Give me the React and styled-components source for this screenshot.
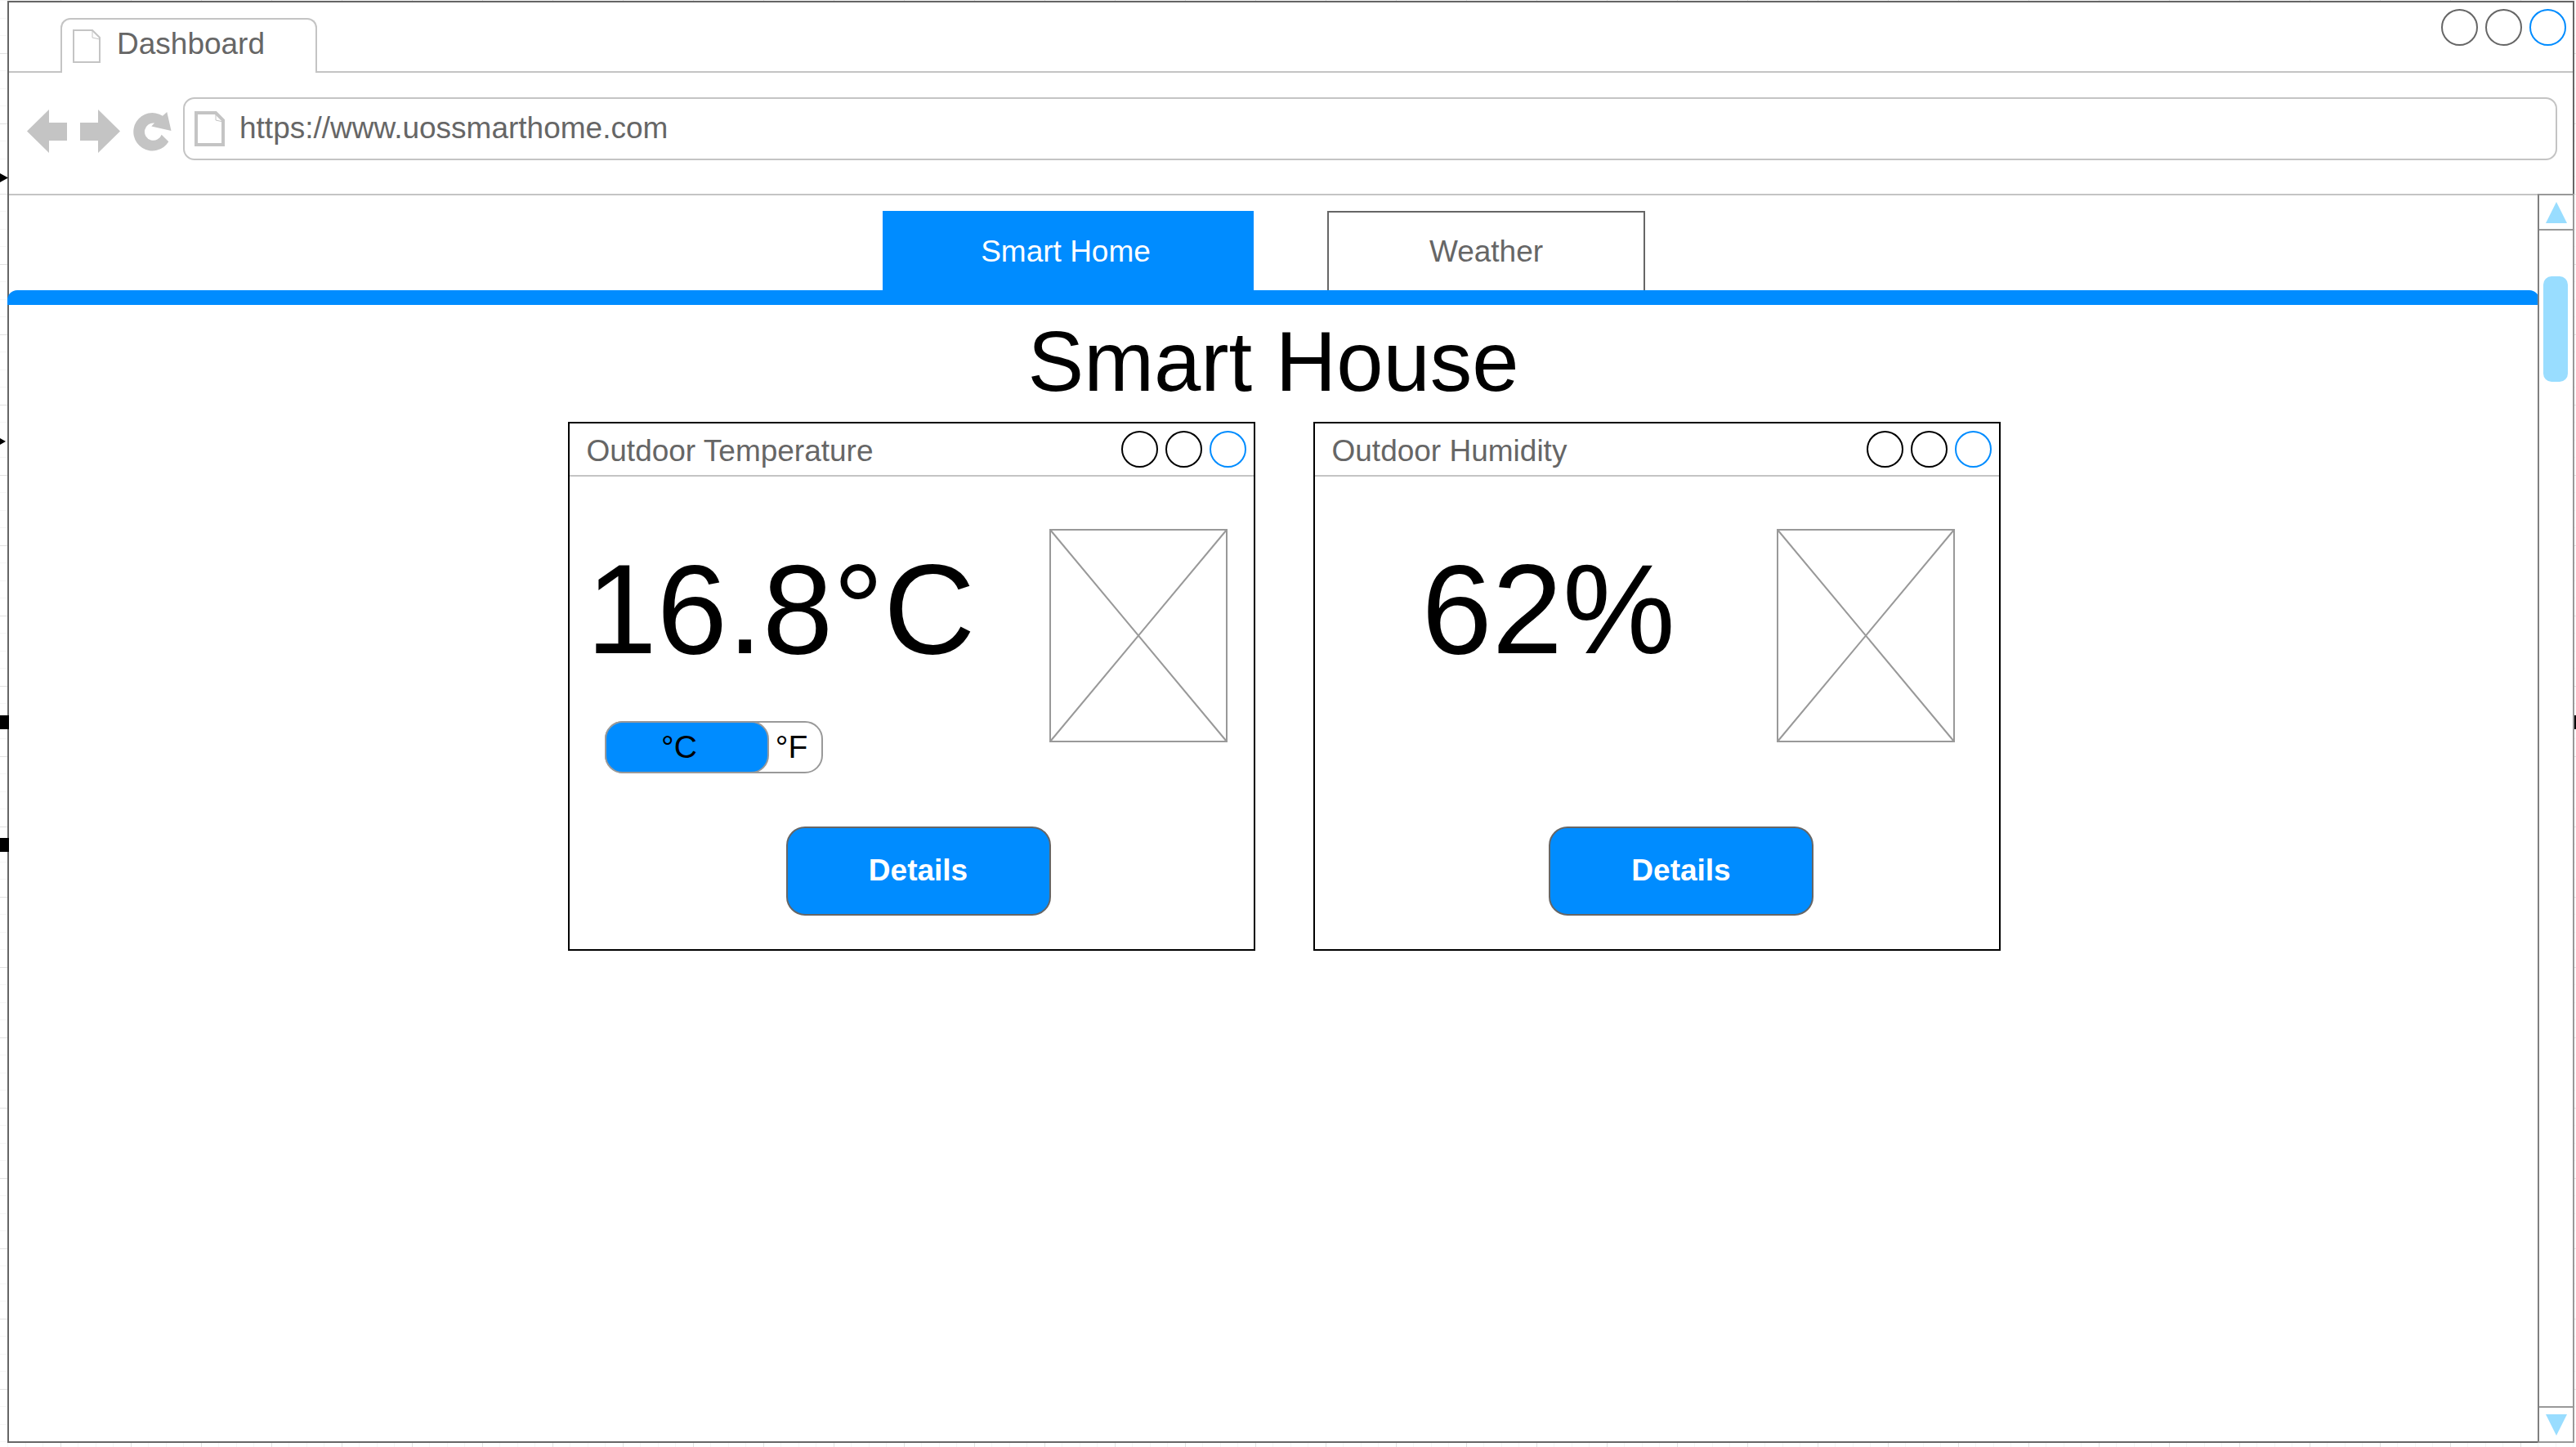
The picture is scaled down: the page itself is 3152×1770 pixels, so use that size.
import React, { useState } from "react";
import styled, { createGlobalStyle } from "styled-components";

const blue = "#008cff";
const paleBlue = "#99ddff";
const ink = "#666666";
const line = "#c4c4c4";
const midLine = "#999999";

const GlobalStyle = createGlobalStyle`
  *, *::before, *::after { box-sizing: border-box; }
  body { margin: 0; background: #fff; }
  body, button, input {
    font-family: "Liberation Sans", Arial, sans-serif;
    font-size: 37px;
    line-height: 42px;
  }
  button { padding: 0; margin: 0; border: 0; background: none; color: inherit; cursor: pointer; }
  svg { display: block; flex: none; }
`;

/* Drawing canvas with its faint ruled grid, visible around the window */
const Canvas = styled.div`
  position: relative;
  display: flex;
  min-height: 100vh;
  padding: 1px 2px 5px 9px;
  overflow: hidden;
  background-color: #fff;
  background-image:
    linear-gradient(#e2e2e2 1px, transparent 1px),
    linear-gradient(90deg, #e2e2e2 1px, transparent 1px),
    linear-gradient(#f6f6f6 1px, transparent 1px),
    linear-gradient(90deg, #f6f6f6 1px, transparent 1px),
    linear-gradient(#f6f6f6 1px, transparent 1px),
    linear-gradient(90deg, #f6f6f6 1px, transparent 1px);
  background-size: 86px 86px, 86px 86px, 43px 43px, 43px 43px, 43px 43px, 43px 43px;
  background-position: 0 65px, 74px 0, 0 0, 31px 0, 0 22px, 9px 0;
`;

const Connector = styled.span`
  position: absolute;
  z-index: 1;
  top: ${(p) => p.$top}px;
  ${(p) => (p.$right ? "right: 0;" : "left: 0;")}
  width: ${(p) => p.$width}px;
  height: ${(p) => p.$height}px;
  background: #000;
  ${(p) => p.$arrow && "clip-path: polygon(0 0, 100% 50%, 0 100%);"}
`;

const Window = styled.div`
  flex: 1;
  display: flex;
  flex-direction: column;
  border: 2px solid ${ink};
  background: #fff;
`;

const TabStrip = styled.header`
  display: flex;
  justify-content: space-between;
  align-items: flex-end;
  height: 86px;
  padding: 0 8px 0 63px;
  border-bottom: 2px solid ${line};
`;

const PageTab = styled.div`
  display: flex;
  align-items: center;
  gap: 20px;
  width: 314px;
  height: 67px;
  margin-bottom: -2px;
  padding: 0 13px;
  border: 2px solid ${line};
  border-bottom: 0;
  border-radius: 12px 12px 0 0;
  background: #fff;
  color: ${ink};
`;

const PageTabTitle = styled.span`
  padding-bottom: 6px;
`;

const Controls = styled.div`
  display: flex;
  align-self: flex-start;
  gap: 9px;
  padding-top: ${(p) => p.$top}px;
`;

const Circle = styled.button`
  width: 45px;
  height: 45px;
  border: 2px solid ${(p) => p.$color};
  border-radius: 50%;
`;

const Toolbar = styled.div`
  display: flex;
  align-items: center;
  gap: 14px;
  padding: 30px 19px 41px 22px;
  border-bottom: 2px solid ${line};
`;

const NavButtons = styled.div`
  display: flex;
  align-items: center;
  gap: 16px;
  padding-top: 6px;
`;

const AddressBar = styled.label`
  flex: 1;
  display: flex;
  align-items: center;
  gap: 18px;
  height: 77px;
  padding: 0 12px;
  border: 2px solid ${line};
  border-radius: 14px;
`;

const AddressInput = styled.input`
  flex: 1;
  min-width: 0;
  padding: 0 0 2px;
  border: 0;
  outline: 0;
  background: none;
  color: ${ink};
`;

const Viewport = styled.div`
  flex: 1;
  display: flex;
`;

const Page = styled.main`
  flex: 1;
  min-width: 0;
`;

const SiteNav = styled.nav`
  display: flex;
  justify-content: center;
  gap: 90px;
  padding: 19px 23px 0 0;
`;

const SiteTab = styled.a`
  display: flex;
  align-items: center;
  justify-content: center;
  width: ${(p) => (p.$active ? 454 : 389)}px;
  height: 97px;
  padding-right: ${(p) => (p.$active ? 6 : 0)}px;
  border: 2px solid ${(p) => (p.$active ? blue : ink)};
  border-bottom: 0;
  background: ${(p) => (p.$active ? blue : "#fff")};
  color: ${(p) => (p.$active ? "#fff" : ink)};
  text-decoration: none;
`;

const Divider = styled.div`
  position: relative;
  height: 18px;
  margin: 0 -2px;
  border-radius: 12px 12px 0 0;
  background: ${blue};
`;

const Title = styled.h1`
  margin: 0;
  padding: 11px 0 14px;
  font-size: 103px;
  line-height: 118px;
  font-weight: 400;
  text-align: center;
`;

const Cards = styled.div`
  display: flex;
  justify-content: center;
  gap: 71px;
  padding-left: 26px;
`;

const Card = styled.section`
  display: flex;
  flex-direction: column;
  width: 841px;
  border: 2px solid #000;
`;

const CardHeader = styled.div`
  display: flex;
  justify-content: space-between;
  align-items: center;
  height: 65px;
  padding: 0 9px 0 21px;
  border-bottom: 2px solid ${line};
`;

const CardTitle = styled.h2`
  margin: 0;
  padding-top: 4px;
  font-size: 37px;
  font-weight: 400;
  color: ${ink};
`;

const CardBody = styled.div`
  flex: 1;
  display: flex;
  flex-direction: column;
  justify-content: space-between;
  gap: 65px;
  padding: 64px 0 41px;
`;

const ReadingRow = styled.div`
  display: flex;
  justify-content: space-between;
  align-items: flex-start;
  padding: 0 ${(p) => p.$end}px 0 ${(p) => p.$start}px;
`;

const Reading = styled.div`
  display: flex;
  flex-direction: column;
  gap: 50px;
  padding-top: 12px;
`;

const Value = styled.p`
  margin: 0;
  font-size: 155px;
  line-height: 173px;
`;

const UnitSwitch = styled.div`
  display: flex;
  width: 267px;
  height: 64px;
  margin-left: 22px;
  border: 2px solid ${midLine};
  border-radius: 22px;
`;

const Unit = styled.button`
  flex: ${(p) => (p.$active ? "0 0 201px" : "1")};
  margin: -2px;
  padding-right: ${(p) => (p.$active ? 18 : 6)}px;
  border: 2px solid ${(p) => (p.$active ? midLine : "transparent")};
  border-radius: 22px;
  background: ${(p) => (p.$active ? blue : "transparent")};
  font-size: 39px;
`;

const Actions = styled.div`
  display: flex;
  justify-content: center;
  padding-left: ${(p) => p.$shift}px;
`;

const DetailsButton = styled.button`
  width: 324px;
  height: 109px;
  padding-bottom: 2px;
  border: 2px solid ${ink};
  border-radius: 23px;
  background: ${blue};
  color: #fff;
  font-weight: 700;
`;

const ScrollBar = styled.div`
  position: relative;
  display: flex;
  flex-direction: column;
  justify-content: space-between;
  width: 45px;
  margin: -2px -2px -2px 0;
  border: 2px solid ${midLine};
  border-left-color: #808080;
`;

const ScrollButton = styled.button`
  display: flex;
  align-items: center;
  justify-content: center;
  height: 43px;
  border-top: ${(p) => (p.$end ? `2px solid ${midLine}` : 0)};
  border-bottom: ${(p) => (p.$end ? 0 : `2px solid ${midLine}`)};
`;

const Track = styled.div`
  flex: 1;
  padding: 56px 0 0 5px;
`;

const Thumb = styled.div`
  width: 30px;
  height: 129px;
  border-radius: 10px;
  background: ${paleBlue};
`;

function PageIcon({ width, height, stroke }) {
  const o = stroke / 2;
  const fold = 9;
  return (
    <svg width={width} height={height} fill="none" stroke={line} aria-hidden="true">
      <path
        strokeWidth={stroke}
        d={`M${o} ${o}H${width - fold - o}L${width - o} ${fold + o}V${height - o}H${o}Z`}
      />
      <path
        strokeWidth="1"
        d={`M${width - fold - o} ${o}V${fold + o}L${width - o} ${fold + o + 2}`}
      />
    </svg>
  );
}

function WindowControls({ color, top = 0 }) {
  return (
    <Controls $top={top}>
      <Circle type="button" aria-label="Minimize" $color={color} />
      <Circle type="button" aria-label="Maximize" $color={color} />
      <Circle type="button" aria-label="Close" $color={blue} />
    </Controls>
  );
}

function Placeholder() {
  return (
    <svg width="218" height="261" fill="none" stroke={midLine} strokeWidth="2" role="img" aria-label="Image">
      <path d="M1 1H217V260H1ZL217 260M217 1L1 260" />
    </svg>
  );
}

function ReadingCard({ title, value, start, end, shift, children }) {
  return (
    <Card>
      <CardHeader>
        <CardTitle>{title}</CardTitle>
        <WindowControls color="#000" top={9} />
      </CardHeader>
      <CardBody>
        <ReadingRow $start={start} $end={end}>
          <Reading>
            <Value>{value}</Value>
            {children}
          </Reading>
          <Placeholder />
        </ReadingRow>
        <Actions $shift={shift}>
          <DetailsButton type="button">Details</DetailsButton>
        </Actions>
      </CardBody>
    </Card>
  );
}

export default function App() {
  const [url, setUrl] = useState("https://www.uossmarthome.com");

  return (
    <Canvas>
      <GlobalStyle />
      <Connector $top={212} $width={10} $height={11} $arrow />
      <Connector $top={536} $width={7} $height={8} $arrow />
      <Connector $top={875} $width={11} $height={17} />
      <Connector $top={1025} $width={11} $height={17} />
      <Connector $top={875} $width={2} $height={17} $right />

      <Window>
        <TabStrip>
          <PageTab>
            <PageIcon width={34} height={41} stroke={2} />
            <PageTabTitle>Dashboard</PageTabTitle>
          </PageTab>
          <WindowControls color={ink} top={8} />
        </TabStrip>

        <Toolbar>
          <NavButtons>
            <button type="button" aria-label="Back">
              <svg width="49" height="53" fill={line}>
                <path d="M0 26.500L27 0V16H49V38H27V53Z" />
              </svg>
            </button>
            <button type="button" aria-label="Forward">
              <svg width="49" height="53" fill={line}>
                <path d="M49 26.500L22 0V16H0V38H22V53Z" />
              </svg>
            </button>
            <button type="button" aria-label="Reload">
              <svg width="47" height="48" fill={line}>
                <path d="M41.300 0L46.500 23L22.300 17.400L26 13.500A10.700 10.700 0 1 0 34.700 27.700L43.300 36.300A23.200 23.200 0 1 1 36 4.700Z" />
              </svg>
            </button>
          </NavButtons>
          <AddressBar>
            <PageIcon width={37} height={43} stroke={4} />
            <AddressInput aria-label="Address" value={url} onChange={(e) => setUrl(e.target.value)} />
          </AddressBar>
        </Toolbar>

        <Viewport>
          <Page>
            <SiteNav>
              <SiteTab href="#smart-home" $active>Smart Home</SiteTab>
              <SiteTab href="#weather">Weather</SiteTab>
            </SiteNav>
            <Divider />
            <Title>Smart House</Title>
            <Cards>
              <ReadingCard title="Outdoor Temperature" value="16.8°C" start={21} end={32} shift={17}>
                <UnitSwitch role="group" aria-label="Temperature unit">
                  <Unit type="button" aria-pressed="true" $active>°C</Unit>
                  <Unit type="button" aria-pressed="false">°F</Unit>
                </UnitSwitch>
              </ReadingCard>
              <ReadingCard title="Outdoor Humidity" value="62%" start={131} end={54} shift={60} />
            </Cards>
          </Page>
          <ScrollBar>
            <ScrollButton type="button" aria-label="Scroll up">
              <svg width="26" height="26" fill={paleBlue}><path d="M13 0L26 26H0Z" /></svg>
            </ScrollButton>
            <Track><Thumb /></Track>
            <ScrollButton type="button" aria-label="Scroll down" $end>
              <svg width="26" height="26" fill={paleBlue}><path d="M0 0H26L13 26Z" /></svg>
            </ScrollButton>
          </ScrollBar>
        </Viewport>
      </Window>
    </Canvas>
  );
}
